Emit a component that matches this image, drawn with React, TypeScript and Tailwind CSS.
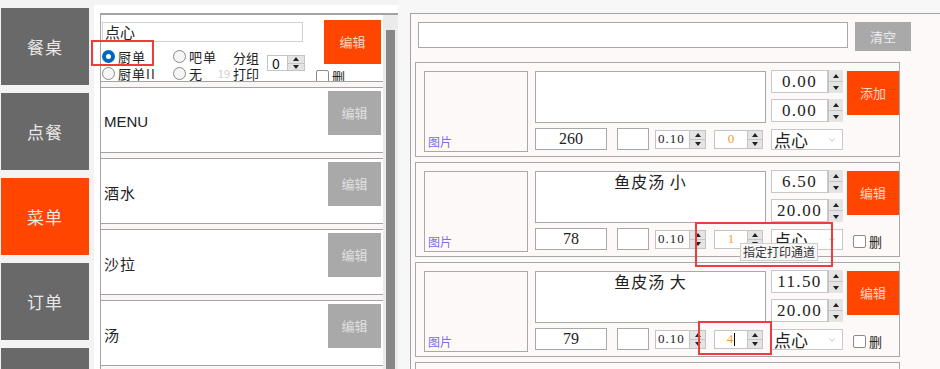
import { ChevronDown } from 'lucide-react';

const SERIF = "font-['Liberation_Serif','Noto_Sans_CJK_SC',serif]";

const NAV = ['餐桌', '点餐', '菜单', '订单', ''];
const GROUPS = ['MENU', '酒水', '沙拉', '汤'];

type Dish = { name: string; price: string; price2: string; code: string; ch: string; btn: string; del: boolean; cursor?: boolean };

const DISHES: Dish[] = [
  { name: '', price: '0.00', price2: '0.00', code: '260', ch: '0', btn: '添加', del: false },
  { name: '鱼皮汤 小', price: '6.50', price2: '20.00', code: '78', ch: '1', btn: '编辑', del: true },
  { name: '鱼皮汤 大', price: '11.50', price2: '20.00', code: '79', ch: '4', btn: '编辑', del: true, cursor: true },
  { name: '', price: '', price2: '', code: '', ch: '', btn: '编辑', del: true },
];

function Arrows({ w = 'w-[15px]' }: { w?: string }) {
  return (
    <div className={`flex ${w} shrink-0 flex-col border-l border-[#c4c4c4] bg-[#e4e4e4]`}>
      <div className="flex flex-1 items-center justify-center border-b border-[#c4c4c4]">
        <div className="h-0 w-0 border-x-[3px] border-b-[4px] border-x-transparent border-b-[#222]" />
      </div>
      <div className="flex flex-1 items-center justify-center">
        <div className="h-0 w-0 border-x-[3px] border-t-[4px] border-x-transparent border-t-[#222]" />
      </div>
    </div>
  );
}

function Radio({ label, on }: { label: string; on?: boolean }) {
  return (
    <div className="flex items-center gap-[3px] text-[13px] leading-none tracking-[0.08em] text-[#222]">
      {on ? (
        <span className="flex h-[13px] w-[13px] shrink-0 items-center justify-center rounded-full bg-[#0067c0]">
          <span className="h-[5px] w-[5px] rounded-full bg-white" />
        </span>
      ) : (
        <span className="h-[13px] w-[13px] shrink-0 rounded-full border border-[#8a8a8a] bg-[#f6f6f6]" />
      )}
      <span>{label}</span>
    </div>
  );
}

function Check({ className = '' }: { className?: string }) {
  return (
    <div className={`flex items-center gap-[3px] text-[13px] leading-none text-[#222] ${className}`}>
      <span className="h-[13px] w-[13px] rounded-[2px] border border-[#8a8a8a] bg-white" />
      <span>删</span>
    </div>
  );
}

function Card({ d }: { d: Dish }) {
  return (
    <div className="flex h-[95px] w-[485px] shrink-0 items-start border border-[#a8a8a8]">
      <div className="ml-[8px] mt-[8px] flex h-[81px] w-[104px] items-end border border-[#a8a8a8] pb-[3px] pl-[3px] text-[12px] leading-none text-[#7b6cf6]">
        图片
      </div>
      <div className="ml-[7px] mt-[8px] w-[231px]">
        <div className="h-[52px] border border-[#a8a8a8] bg-white pt-0 text-center text-[16px] leading-[18px] tracking-[0.06em] text-[#222]">
          {d.name}
        </div>
        <div className="mt-[5px] flex h-[22px] items-center">
          <div className={`flex h-[22px] w-[72px] items-center justify-center border border-[#a8a8a8] bg-white text-[16px] text-[#222] ${SERIF}`}>
            {d.code}
          </div>
          <div className="ml-[10px] h-[22px] w-[32px] border border-[#a8a8a8] bg-white" />
          <div className="ml-[6px] flex h-[19px] w-[51px] border border-[#c4c4c4] bg-white">
            <div className={`flex flex-1 items-center pl-[2px] text-[13px] tracking-[0.08em] text-[#222] ${SERIF}`}>{d.code ? '0.10' : ''}</div>
            <Arrows w="w-[16px]" />
          </div>
          <div className="ml-[8px] flex h-[19px] w-[49px] border border-[#c4c4c4] bg-white">
            <div className={`flex flex-1 items-center justify-center text-[13px] text-[#f29a38] ${SERIF}`}>
              {d.ch}
              {d.cursor && <span className="ml-px h-[13px] w-px bg-black" />}
            </div>
            <Arrows />
          </div>
        </div>
      </div>
      <div className="ml-[5px] mt-[7px] w-[72px]">
        {[d.price, d.price2].map((p, i) => (
          <div key={i} className={`flex h-[23px] ${i ? 'mt-[6px]' : ''}`}>
            <div className={`flex flex-1 items-center justify-center border border-[#c8c8c8] bg-white text-[17px] tracking-[0.08em] text-[#222] ${SERIF}`}>
              {p}
            </div>
            <Arrows />
          </div>
        ))}
        <div className="mt-[7px] flex h-[21px] items-center border border-[#c8c8c8] bg-white pl-[2px]">
          <span className="text-[17px] leading-none text-[#222]">点心</span>
          <ChevronDown className="ml-auto mr-[5px] h-[10px] w-[10px] text-[#9a9a9a]" strokeWidth={1.5} />
        </div>
      </div>
      <div className="ml-[4px] mt-[8px] w-[52px]">
        <div className="flex h-[44px] items-center justify-center bg-[#ff4500] text-[13px] text-[#ffd6c4]">{d.btn}</div>
        {d.del && <Check className="mt-[20px] pl-[6px]" />}
      </div>
    </div>
  );
}

export default function App() {
  return (
    <div className="relative flex h-[369px] w-[940px] overflow-hidden bg-[#f3f3f3] font-['Noto_Sans_CJK_SC',sans-serif]">
      <nav className="flex w-[94px] shrink-0 flex-col gap-2 pl-px pt-2">
        {NAV.map((n, i) => (
          <div
            key={i}
            className={`flex h-[77px] w-[88px] shrink-0 items-center justify-center text-[17px] tracking-[0.06em] text-[#e8e8e8] ${i === 2 ? 'bg-[#ff4500]' : 'bg-[#696969]'}`}
          >
            {n}
          </div>
        ))}
      </nav>

      <div className="mt-[5px] flex w-[304px] shrink-0 flex-col bg-white pl-[6px] pt-[8px]">
        <div className="flex min-h-0 flex-1 border-l border-t-2 border-[#a3a3a3]">
          <div className="flex w-[282px] flex-col gap-[5px] bg-[#fbf6f6]">
            <div className="flex h-[67px] shrink-0 overflow-hidden border-b border-[#a3a3a3] bg-white">
              <div className="min-w-0 flex-1 pl-px pt-[7px]">
                <div className="flex h-[20px] w-[201px] items-center border border-[#d0d0d0] pl-[2px] text-[15px] text-[#222]">点心</div>
                <div className="mt-[6px] flex">
                  <div className="grid w-[131px] shrink-0 grid-cols-[71px_60px] grid-rows-[17px_17px] items-center">
                    <Radio label="厨单" on />
                    <Radio label="吧单" />
                    <Radio label="厨单II" />
                    <div className="flex items-center">
                      <Radio label="无" />
                      <span className="ml-auto mr-[3px] text-[11px] leading-none text-[#cfcfcf]">19</span>
                    </div>
                  </div>
                  <div className="w-[34px] shrink-0 pt-[2px] text-[13px] leading-[16px] text-[#222]">
                    分组<br />打印
                  </div>
                  <div className="mt-[7px] flex h-[16px] w-[38px] shrink-0 border border-[#c4c4c4] bg-white">
                    <div className="flex flex-1 items-center pl-[4px] text-[14px] text-[#111]">0</div>
                    <Arrows w="w-[17px]" />
                  </div>
                  <Check className="ml-[11px] mt-[22px] shrink-0" />
                </div>
              </div>
              <div className="mr-[2px] mt-[5px] flex h-[44px] w-[57px] shrink-0 items-center justify-center bg-[#ff4500] text-[13px] text-[#ffd6c4]">
                编辑
              </div>
            </div>
            {GROUPS.map((g) => (
              <div key={g} className="flex h-[66px] shrink-0 border-y border-[#a3a3a3] bg-white">
                <span className={`mt-[5px] self-center pl-[3px] text-[15px] text-[#222] ${g === 'MENU' ? "font-['Liberation_Sans',sans-serif]" : 'tracking-[0.06em]'}`}>
                  {g}
                </span>
                <div className="ml-auto mr-[2px] mt-[3px] flex h-[44px] w-[53px] items-center justify-center bg-[#a9a9a9] text-[13px] text-[#e0e0e0]">
                  编辑
                </div>
              </div>
            ))}
          </div>
          <div className="w-[15px] bg-[#ebebeb] pl-[3px] pt-[15px]">
            <div className="h-full w-[9px] bg-[#878787]" />
          </div>
        </div>
      </div>

      <div className="min-w-0 flex-1 bg-[#f7f7f7] pl-[12px] pt-[13px]">
        <div className="h-full border-l border-t border-[#a3a3a3] bg-[#fdf9f8] pt-[8px]">
          <div className="flex items-start gap-[7px] pl-[7px]">
            <div className="h-[26px] w-[430px] border border-[#a8a8a8] bg-white" />
            <div className="flex h-[29px] w-[56px] items-center justify-center bg-[#a9a9a9] text-[13px] text-[#ececec]">清空</div>
          </div>
          <div className="mt-[11px] flex flex-col gap-[5px] pl-[4px]">
            {DISHES.map((d, i) => (
              <Card key={i} d={d} />
            ))}
          </div>
        </div>
      </div>

      <div className="absolute left-[740px] top-[243px] flex h-[18px] w-[78px] items-center justify-center border border-[#cfcfcf] bg-[#f7f7f7] text-[12px] text-[#333]">
        指定打印通道
      </div>
      <div className="absolute left-[91px] top-[40px] h-[26px] w-[63px] border-2 border-[#ee3b3b]" />
      <div className="absolute left-[695px] top-[222px] h-[45px] w-[138px] border-2 border-[#ee3b3b]" />
      <div className="absolute left-[698px] top-[321px] h-[34px] w-[74px] border-2 border-[#ee3b3b]" />
    </div>
  );
}
